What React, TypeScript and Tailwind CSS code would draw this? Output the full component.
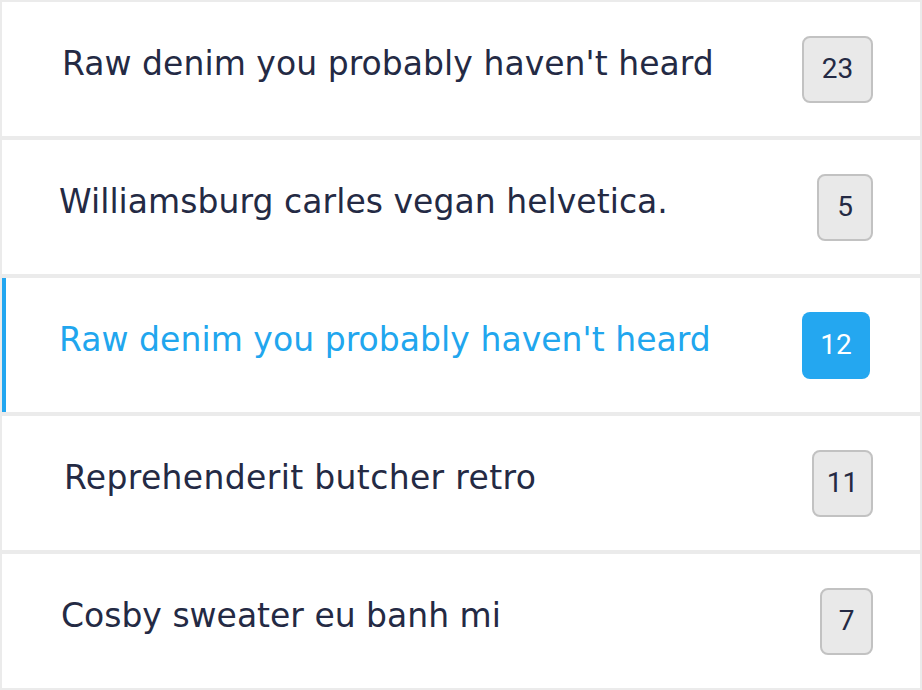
import React from "react";

type Item = {
  text: string;
  count: string;
  active?: boolean;
  pl: string;
  bw: string;
  mr: string;
  tr: string;
};

const items: Item[] = [
  { text: "Raw denim you probably haven't heard", count: "23", pl: "pl-[60px]", bw: "w-[71px]", mr: "mr-[47px]", tr: "tracking-[0.05px]" },
  { text: "Williamsburg carles vegan helvetica.", count: "5", pl: "pl-[57px]", bw: "w-[56px]", mr: "mr-[47px]", tr: "tracking-[0.05px]" },
  { text: "Raw denim you probably haven't heard", count: "12", active: true, pl: "pl-[53px]", bw: "w-[68px]", mr: "mr-[50px]", tr: "tracking-[0.05px]" },
  { text: "Reprehenderit butcher retro", count: "11", pl: "pl-[62px]", bw: "w-[61px]", mr: "mr-[47px]", tr: "tracking-[0.35px]" },
  { text: "Cosby sweater eu banh mi", count: "7", pl: "pl-[59px]", bw: "w-[53px]", mr: "mr-[47px]", tr: "tracking-[0px]" },
];

export default function App() {
  return (
    <div className="w-[922px] h-[690px] bg-[#ebebeb] p-[2px] flex flex-col gap-[4px]">
      {items.map((it, i) => (
        <div
          key={i}
          className={
            "h-[134px] bg-white flex items-center justify-between " +
            it.pl +
            (it.active ? " border-l-4 border-[#22a6f0]" : "")
          }
        >
          <span
            className={
              "mb-[12px] text-[33px] leading-none whitespace-nowrap " +
              it.tr +
              (it.active ? " text-[#21a6ee]" : " text-[#242a44]")
            }
            style={{ fontFamily: '"DejaVu Sans", sans-serif' }}
          >
            {it.text}
          </span>
          <div
            className={
              "h-[67px] rounded-[8px] flex items-center justify-center text-[28px] " +
              it.bw +
              " " +
              it.mr +
              (it.active
                ? " bg-[#24a7f0] text-white"
                : " bg-[#e9e9e9] border-2 border-[#c2c2c2] text-[#242a44]")
            }
            style={{ fontFamily: "Roboto, sans-serif" }}
          >
            {it.count}
          </div>
        </div>
      ))}
    </div>
  );
}
